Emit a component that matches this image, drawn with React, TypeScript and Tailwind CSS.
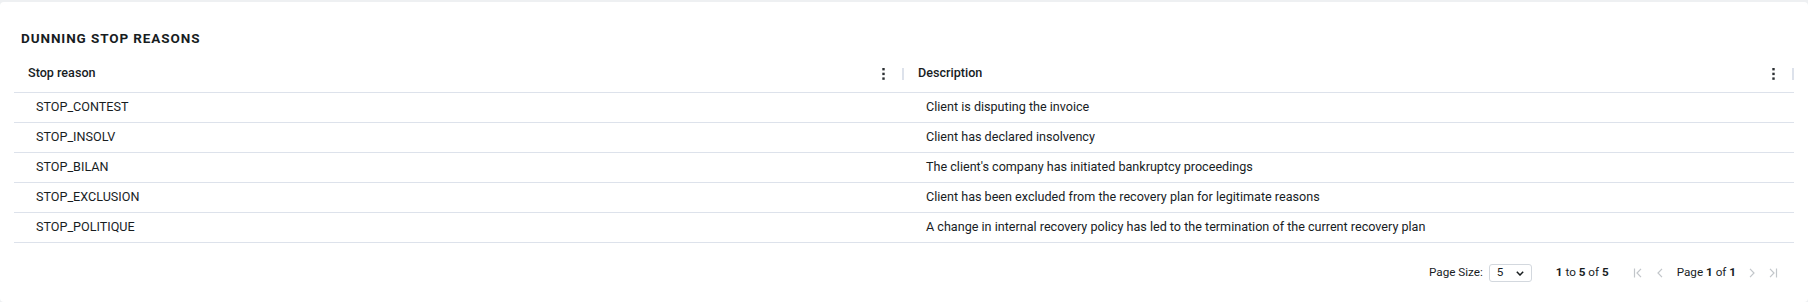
import React from "react";

const rows: [string, string][] = [
  ["STOP_CONTEST", "Client is disputing the invoice"],
  ["STOP_INSOLV", "Client has declared insolvency"],
  ["STOP_BILAN", "The client's company has initiated bankruptcy proceedings"],
  ["STOP_EXCLUSION", "Client has been excluded from the recovery plan for legitimate reasons"],
  ["STOP_POLITIQUE", "A change in internal recovery policy has led to the termination of the current recovery plan"],
];

function Dots() {
  return (
    <svg width="3" height="12" viewBox="0 0 3 12" className="block">
      <rect x="0.3" y="0" width="2.4" height="2.4" fill="#2b2f33" />
      <rect x="0.3" y="4.7" width="2.4" height="2.4" fill="#2b2f33" />
      <rect x="0.3" y="9.4" width="2.4" height="2.4" fill="#2b2f33" />
    </svg>
  );
}

function HeaderCell({ label }: { label: string }) {
  return (
    <div className="flex-1 flex items-center pl-[14px] h-full">
      <span className="flex-1 text-[12.6px] font-medium">{label}</span>
      <span className="w-[16px] flex justify-center">
        <Dots />
      </span>
      <span className="w-[11px]" />
      <span className="w-[2px] h-[12px] bg-[#dde2eb]" />
    </div>
  );
}

function Chev({ dir, bar }: { dir: "l" | "r"; bar?: boolean }) {
  return (
    <svg width="14" height="12" viewBox="0 0 14 12" fill="none" stroke="#c2c6ca" strokeWidth="1.2" className="block">
      {dir === "l" ? (
        <>
          {bar && <line x1="3.5" y1="1.5" x2="3.5" y2="10.5" />}
          <polyline points={bar ? "10,1.8 6,6 10,10.2" : "9,1.8 5,6 9,10.2"} />
        </>
      ) : (
        <>
          {bar && <line x1="10.5" y1="1.5" x2="10.5" y2="10.5" />}
          <polyline points={bar ? "4,1.8 8,6 4,10.2" : "5,1.8 9,6 5,10.2"} />
        </>
      )}
    </svg>
  );
}

export default function App() {
  return (
    <div className="bg-[#eef0f2] pt-[2px] font-['Roboto',sans-serif] text-[#181d1f]">
      <div className="bg-white rounded-[4px] h-[300px] px-[14px] pt-[28px]">
        <h2 className="px-[7px] text-[13.5px] leading-[16px] font-bold tracking-[0.9px]">
          DUNNING STOP REASONS
        </h2>
        <div className="mt-[9px]">
          <div className="flex h-[38px] border-b border-[#dde2eb]">
            <HeaderCell label="Stop reason" />
            <HeaderCell label="Description" />
          </div>
          {rows.map(([a, b]) => (
            <div key={a} className="flex h-[30px] items-center border-b border-[#dde2eb] text-[12.6px]">
              <div className="flex-1 pl-[22px]">{a}</div>
              <div className="flex-1 pl-[22px]">{b}</div>
            </div>
          ))}
        </div>
        <div className="h-[60px] flex items-center justify-end pr-[14px] text-[11.7px]">
          <span>Page Size:</span>
          <div className="ml-[6px] w-[43px] h-[18px] border border-[#d3d8de] rounded-[3px] flex items-center pl-[7px] pr-[7px] justify-between">
            <span>5</span>
            <svg width="8" height="5" viewBox="0 0 8 5" fill="none" stroke="#181d1f" strokeWidth="1.5" className="block">
              <polyline points="0.8,0.8 4,4 7.2,0.8" />
            </svg>
          </div>
          <span className="ml-[24px]">
            <b className="font-bold">1</b> to <b className="font-bold">5</b> of <b className="font-bold">5</b>
          </span>
          <span className="ml-[22px]">
            <Chev dir="l" bar />
          </span>
          <span className="ml-[8px]">
            <Chev dir="l" />
          </span>
          <span className="ml-[10px]">
            Page <b className="font-bold">1</b> of <b className="font-bold">1</b>
          </span>
          <span className="ml-[9px]">
            <Chev dir="r" />
          </span>
          <span className="ml-[7px]">
            <Chev dir="r" bar />
          </span>
        </div>
      </div>
    </div>
  );
}
